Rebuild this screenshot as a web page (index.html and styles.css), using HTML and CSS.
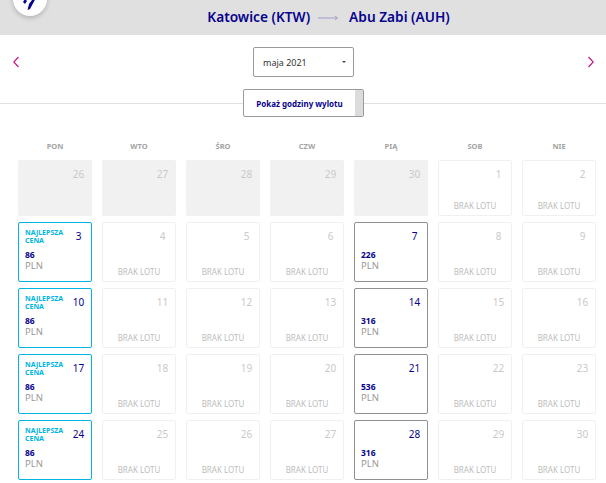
FILE: index.html
```html
<!DOCTYPE html>
<html lang="pl">
<head>
    <meta charset="UTF-8">
    <title>Kalendarz lotów</title>
    <link rel="stylesheet" href="styles.css">
</head>
<body>
    <header class="header">
        <div class="logo">
            <svg width="16" height="14" viewBox="0 0 16 14"><path d="M1 6 L3 3 L5 5 L3 8 Z M13 0 L15 0 L8 13 L5.5 14 L7 8 Z" fill="#06038d"/></svg>
        </div>
        <span class="route-city">Katowice (KTW)</span>
        <svg class="route-arrow" width="20" height="6" viewBox="0 0 20 6"><path d="M0 3 H19 M17 1 L19.5 3 L17 5" fill="none" stroke="#9f9dc9" stroke-width="1"/></svg>
        <span class="route-city">Abu Zabi (AUH)</span>
    </header>

    <div class="month-nav">
        <svg width="6" height="12" viewBox="0 0 6 12"><path d="M5.5 1 L0.8 6 L5.5 11" fill="none" stroke="#c8107e" stroke-width="1.1"/></svg>
        <div class="month-select">
            <span>maja 2021</span>
            <span class="caret"></span>
        </div>
        <svg width="6" height="12" viewBox="0 0 6 12"><path d="M0.5 1 L5.2 6 L0.5 11" fill="none" stroke="#c8107e" stroke-width="1.1"/></svg>
    </div>

    <div class="toggle-row">
        <div class="toggle">
            <span class="toggle-label">Pokaż godziny wylotu</span>
            <span class="toggle-knob"></span>
        </div>
    </div>

    <div class="weekdays">
        <div>PON</div><div>WTO</div><div>ŚRO</div><div>CZW</div><div>PIĄ</div><div>SOB</div><div>NIE</div>
    </div>

    <div class="calendar">
        <div class="day past"><span class="num">26</span></div>
        <div class="day past"><span class="num">27</span></div>
        <div class="day past"><span class="num">28</span></div>
        <div class="day past"><span class="num">29</span></div>
        <div class="day past"><span class="num">30</span></div>
        <div class="day empty"><span class="num">1</span><span class="no-flight">BRAK LOTU</span></div>
        <div class="day empty"><span class="num">2</span><span class="no-flight">BRAK LOTU</span></div>

        <div class="day best"><span class="best-label">NAJLEPSZA<br>CENA</span><span class="num">3</span><span class="price">86</span><span class="cur">PLN</span></div>
        <div class="day empty"><span class="num">4</span><span class="no-flight">BRAK LOTU</span></div>
        <div class="day empty"><span class="num">5</span><span class="no-flight">BRAK LOTU</span></div>
        <div class="day empty"><span class="num">6</span><span class="no-flight">BRAK LOTU</span></div>
        <div class="day flight"><span class="num">7</span><span class="price">226</span><span class="cur">PLN</span></div>
        <div class="day empty"><span class="num">8</span><span class="no-flight">BRAK LOTU</span></div>
        <div class="day empty"><span class="num">9</span><span class="no-flight">BRAK LOTU</span></div>

        <div class="day best"><span class="best-label">NAJLEPSZA<br>CENA</span><span class="num">10</span><span class="price">86</span><span class="cur">PLN</span></div>
        <div class="day empty"><span class="num">11</span><span class="no-flight">BRAK LOTU</span></div>
        <div class="day empty"><span class="num">12</span><span class="no-flight">BRAK LOTU</span></div>
        <div class="day empty"><span class="num">13</span><span class="no-flight">BRAK LOTU</span></div>
        <div class="day flight"><span class="num">14</span><span class="price">316</span><span class="cur">PLN</span></div>
        <div class="day empty"><span class="num">15</span><span class="no-flight">BRAK LOTU</span></div>
        <div class="day empty"><span class="num">16</span><span class="no-flight">BRAK LOTU</span></div>

        <div class="day best"><span class="best-label">NAJLEPSZA<br>CENA</span><span class="num">17</span><span class="price">86</span><span class="cur">PLN</span></div>
        <div class="day empty"><span class="num">18</span><span class="no-flight">BRAK LOTU</span></div>
        <div class="day empty"><span class="num">19</span><span class="no-flight">BRAK LOTU</span></div>
        <div class="day empty"><span class="num">20</span><span class="no-flight">BRAK LOTU</span></div>
        <div class="day flight"><span class="num">21</span><span class="price">536</span><span class="cur">PLN</span></div>
        <div class="day empty"><span class="num">22</span><span class="no-flight">BRAK LOTU</span></div>
        <div class="day empty"><span class="num">23</span><span class="no-flight">BRAK LOTU</span></div>

        <div class="day best"><span class="best-label">NAJLEPSZA<br>CENA</span><span class="num">24</span><span class="price">86</span><span class="cur">PLN</span></div>
        <div class="day empty"><span class="num">25</span><span class="no-flight">BRAK LOTU</span></div>
        <div class="day empty"><span class="num">26</span><span class="no-flight">BRAK LOTU</span></div>
        <div class="day empty"><span class="num">27</span><span class="no-flight">BRAK LOTU</span></div>
        <div class="day flight"><span class="num">28</span><span class="price">316</span><span class="cur">PLN</span></div>
        <div class="day empty"><span class="num">29</span><span class="no-flight">BRAK LOTU</span></div>
        <div class="day empty"><span class="num">30</span><span class="no-flight">BRAK LOTU</span></div>
    </div>
</body>
</html>
```

FILE: styles.css
```css
body {
    margin: 0;
    height: 483px;
    overflow: hidden;
    background: #fff;
    font-family: "Noto Sans", "Open Sans", sans-serif;
    color: #06038d;
}

.header {
    position: relative;
    height: 35px;
    background: #e0e0e0;
    display: flex;
    align-items: center;
    justify-content: center;
    gap: 8px;
    padding: 0 0 2px 51px;
    box-sizing: border-box;
}

.route-city {
    font-size: 13.7px;
    font-weight: 600;
}

.route-arrow {
    margin: 2px 3px 0 0;
}

.logo {
    position: absolute;
    left: 13px;
    top: -18px;
    width: 34px;
    height: 34px;
    border-radius: 50%;
    background: #fff;
    box-shadow: 0 2px 5px rgba(0, 0, 0, 0.2);
    display: flex;
    align-items: flex-end;
    justify-content: center;
}

.logo svg {
    margin-bottom: 6px;
}

.month-nav {
    display: flex;
    align-items: center;
    justify-content: space-between;
    padding: 12px 12px 0 13px;
}

.month-select {
    width: 101px;
    height: 30px;
    box-sizing: border-box;
    border: 1px solid #9a9a9a;
    border-radius: 2px;
    padding: 0 7px 0 9px;
    display: flex;
    align-items: center;
    justify-content: space-between;
    font-size: 9px;
    color: #333;
}

.caret {
    width: 0;
    height: 0;
    border-left: 2px solid transparent;
    border-right: 2px solid transparent;
    border-top: 2px solid #444;
}

.toggle-row {
    margin-top: 12px;
    height: 28px;
    display: flex;
    align-items: center;
    justify-content: center;
    padding-left: 1px;
    background: linear-gradient(#e0e0e0, #e0e0e0) 0 14px / 100% 1px no-repeat;
}

.toggle {
    width: 121px;
    height: 28px;
    box-sizing: border-box;
    background: #fff;
    border: 1px solid #9a9a9a;
    border-radius: 2px;
    display: flex;
}

.toggle-label {
    flex: 1;
    display: flex;
    align-items: center;
    justify-content: center;
    font-size: 8px;
    font-weight: 700;
    white-space: nowrap;
}

.toggle-knob {
    width: 8px;
    background: #dcdcdc;
}

.weekdays {
    margin-top: 21px;
    padding-left: 18px;
    display: grid;
    grid-template-columns: repeat(7, 74px);
    column-gap: 10px;
    text-align: center;
    font-size: 7.5px;
    font-weight: 700;
    line-height: 16px;
    color: #a3a3a3;
    height: 16px;
}

.calendar {
    margin-top: 6px;
    padding-left: 18px;
    display: grid;
    grid-template-columns: repeat(7, 74px);
    grid-template-rows: 56px repeat(4, 60px);
    column-gap: 10px;
    row-gap: 6px;
}

.day {
    position: relative;
    box-sizing: border-box;
    border-radius: 2px;
    display: flex;
    flex-direction: column;
}

.past {
    background: #f1f1f1;
}

.empty {
    border: 1px solid #f0f0f0;
}

.best {
    border: 1px solid #00b5e2;
}

.flight {
    border: 1px solid #8f8f8f;
}

.num {
    position: absolute;
    top: 6px;
    right: 6px;
    width: 13px;
    text-align: center;
    font-size: 10px;
    line-height: 14px;
    color: #c9c9c9;
}

.past .num {
    top: 7px;
    right: 7px;
}

.best .num,
.flight .num {
    color: #06038d;
}

.best-label {
    position: absolute;
    top: 6px;
    left: 6px;
    font-size: 7px;
    line-height: 8px;
    font-weight: 700;
    color: #00b5e2;
}

.no-flight {
    margin-top: auto;
    margin-bottom: 4px;
    text-align: center;
    font-size: 8px;
    line-height: 10px;
    color: #bdbdbd;
}

.price {
    margin-top: auto;
    padding-left: 6px;
    font-size: 8.5px;
    line-height: 11px;
    font-weight: 700;
}

.cur {
    padding: 0 0 10px 6px;
    font-size: 9.5px;
    line-height: 11px;
    color: #999;
}
```
